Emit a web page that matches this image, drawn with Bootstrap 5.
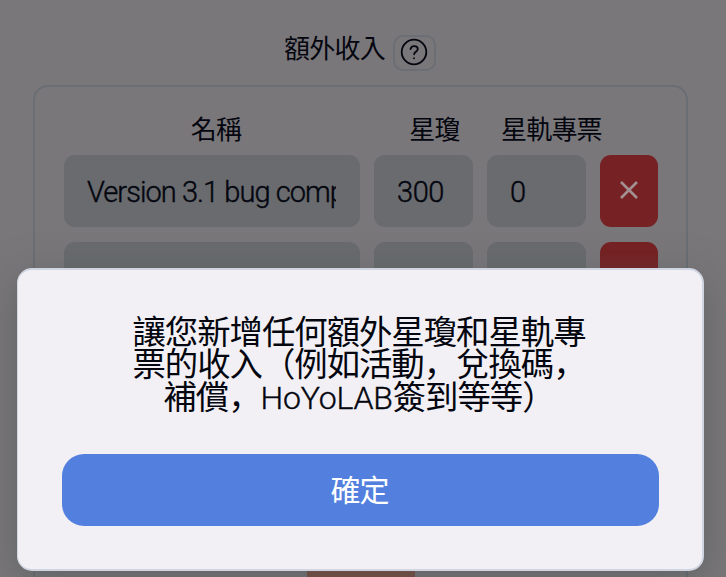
<!DOCTYPE html>
<html lang="zh-Hant">
<head>
<meta charset="utf-8">
<meta name="viewport" content="width=device-width, initial-scale=1">
<title>額外收入</title>
<link href="https://cdn.jsdelivr.net/npm/bootstrap@5.3.0/dist/css/bootstrap.min.css" rel="stylesheet">
<script src="https://cdn.jsdelivr.net/npm/bootstrap@5.3.0/dist/js/bootstrap.bundle.min.js"></script>
<style>
body{background:#7a777a;color:#04060f;font-family:Roboto,"Noto Sans CJK TC",sans-serif;height:577px}
.page-heading{padding-top:31px;height:85px;padding-right:6px}
.title-text{font-size:26px;line-height:36px;letter-spacing:-.8px;font-weight:400}
.help-btn{width:43px;height:36px;margin:4px 0 0 8px;border:2px solid #6b6e74;border-radius:10px;color:#04060f}
.help-btn svg{margin-top:-2px}
.income-panel{width:655px;height:520px;margin-left:33px;border:2px solid #696d74;border-radius:15px;padding:26px 28px 0 29px}
.field-grid{display:grid;grid-template-columns:296px 99px 99px 58px;column-gap:14px}
.labels{font-size:26px;line-height:34px;height:42px;letter-spacing:-.8px}
.labels>:first-child{padding-left:8px}
.labels>:nth-child(2){padding-left:22px}
.labels>:nth-child(3){margin:0 -14px 0 14px}
.entry{margin-bottom:15px}
.entry .form-control,.entry .form-control:focus{height:72px;border:0;border-radius:11px;background:#696b6e;color:#04060f;font-size:29px;font-weight:300;-webkit-text-stroke:.4px #04060f;line-height:36px;padding:19px 24px 17px 23px;letter-spacing:-.4px}
.entry .name-field{letter-spacing:-.95px!important}
.remove-btn{height:72px;border-radius:11px;background:#762123;color:#a39092}
.remove-btn svg{margin:-3px 1px 0 0}
.add-btn{width:108px;height:100px;background:#7b4c41;margin:100px auto 0 243px}
.notice{top:268px;left:17px;width:687px;height:303px;background:#f2f0f5;border:2px solid #cfd6e2;border-left-width:1px;border-radius:15px;padding:47px 44px 0;box-shadow:0 10px 38px rgba(70,80,80,.5);z-index:10}
.message{font-family:Roboto,"Noto Sans CJK SC",sans-serif;font-size:33.4px;line-height:32.4px;letter-spacing:-1.03px;height:137px;padding-right:2px}
.latin{font-size:32px;letter-spacing:-.2px;font-weight:300;-webkit-text-stroke:.4px #04060f}
.confirm-btn,.confirm-btn:hover{width:597px;height:72px;border-radius:22px;background:#5380df;color:#fff;font-size:30px;letter-spacing:-1px;line-height:74px;padding-right:2px!important}
</style>
</head>
<body class="overflow-hidden position-relative">
<main>
  <header class="page-heading d-flex justify-content-center align-items-start">
    <h1 class="title-text m-0">額外收入</h1>
    <button class="help-btn btn p-0 d-flex align-items-center justify-content-center" aria-label="說明">
      <svg width="28" height="28" viewBox="0 0 28 28" fill="none" stroke="currentColor" stroke-width="1.8" stroke-linecap="round" stroke-linejoin="round"><circle cx="14" cy="14" r="12.3"/><path d="M10.5 11.2c.3-2 1.7-3.1 3.7-3.1 2.1 0 3.6 1.2 3.6 3 0 2.7-3.7 2.7-3.7 5.2"/><path d="M14 20.2v.1"/></svg>
    </button>
  </header>
  <section class="income-panel">
    <div class="field-grid labels text-center text-nowrap">
      <div>名稱</div><div>星瓊</div><div>星軌專票</div><div></div>
    </div>
    <div class="field-grid entry">
      <input class="form-control name-field" value="Version 3.1 bug compensation" aria-label="名稱">
      <input class="form-control" value="300" aria-label="星瓊">
      <input class="form-control" value="0" aria-label="星軌專票">
      <button class="remove-btn btn p-0 border-0" aria-label="刪除"><svg width="18" height="18" viewBox="0 0 18 18" stroke="currentColor" stroke-width="2.6"><path d="M1 1l16 16M17 1L1 17"/></svg></button>
    </div>
    <div class="field-grid entry">
      <input class="form-control" aria-label="名稱">
      <input class="form-control" aria-label="星瓊">
      <input class="form-control" aria-label="星軌專票">
      <button class="remove-btn btn p-0 border-0" aria-label="刪除"></button>
    </div>
    <div class="field-grid entry">
      <input class="form-control" aria-label="名稱">
      <input class="form-control" aria-label="星瓊">
      <input class="form-control" aria-label="星軌專票">
      <button class="remove-btn btn p-0 border-0" aria-label="刪除"></button>
    </div>
    <div class="add-btn"></div>
  </section>
</main>
<div class="notice position-absolute" role="dialog" aria-modal="true">
  <div class="message text-center text-nowrap" lang="zh-Hans">讓您新增任何額外星瓊和星軌專<br>票的收入（例如活動，兌換碼，<br>補償，<span class="latin">HoYoLAB</span>簽到等等）</div>
  <button class="confirm-btn btn p-0 border-0">確定</button>
</div>
</body>
</html>
